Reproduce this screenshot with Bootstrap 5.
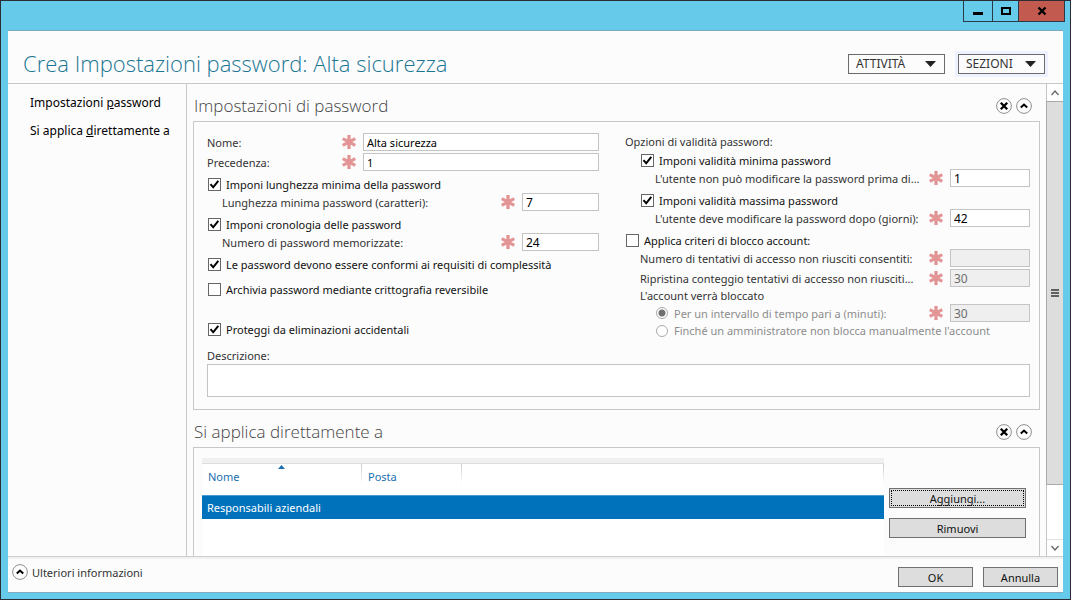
<!DOCTYPE html>
<html lang="it">
<head>
<meta charset="utf-8">
<meta name="viewport" content="width=device-width, initial-scale=1">
<title>Crea Impostazioni password</title>
<link href="https://cdn.jsdelivr.net/npm/bootstrap@5.3.0/dist/css/bootstrap.min.css" rel="stylesheet">
<style>
  body { font-family: "Noto Sans", "Open Sans", sans-serif; font-size: 11px; line-height: 17px; color: #333; background: #66caea; }
  .win { border: 1px solid #2c2c35; background: #66caea; }
  .titlebar { height: 29px; padding-right: 5px; }
  .wbtn { height: 21px; border: 1px solid #2b3a48; border-top: 0; background: transparent; padding: 0; margin-left: -1px; color: #000; }
  .wbtn.min { width: 30px; } .wbtn.max { width: 27px; } .wbtn.cls { width: 47px; background: #c35a50; }
  .client { background: #fcfcfc; margin: 0 7px 6px; border-top: 1px solid #7fabc0; border-bottom: 1px solid #7fabc0; min-height: 0; }
  .head { height: 53px; padding: 0 14px 0 15px; border-bottom: 1px solid #c8c8c8; }
  .head h1 { font-family: "Open Sans", sans-serif; font-size: 22px; line-height: 30px; font-weight: 300; color: #1b7693; padding-top: 12px; }
  .tools { column-gap: 13px; padding: 14px 4px 0 0; }
  .drop { height: 20px; border: 1px solid #6b6b6b; background: #fcfcfc; padding: 0 8px 0 7px; color: #333; font-size: 12px; line-height: 16px; }
  .drop.act { width: 97px; } .drop.sez { width: 87px; box-shadow: 0 0 0 3px #eef2ff; }
  .side { width: 179px; border-right: 1px solid #c8c8c8; padding: 10px 0 0 22px; font-size: 12px; }
  .side a { color: #000; text-decoration: none; margin-bottom: 11px; white-space: nowrap; }
  .content { min-width: 0; overflow: hidden; padding: 0 6px; }
  .content h2 { font-family: "Open Sans", sans-serif; font-size: 17px; line-height: 24px; font-weight: 300; color: #444; }
  .sec { height: 37px; padding: 6px 8px 0 1px; }
  .rnd { width: 16px; height: 16px; border: 0; background: none; padding: 0; line-height: 0; display: block; }
  .panel { border: 1px solid #c8c8c8; padding: 11px 9px 12px 13px; flex-shrink: 0; }
  .cols { display: grid; grid-template-columns: minmax(0,392fr) minmax(0,405fr); column-gap: 26px; height: 214px; }
  .ln { display: flex; align-items: center; height: 18px; white-space: nowrap; }
  .ln label { flex: 1 1 0; min-width: 0; }
  .ln svg { flex: none; margin-right: 7px; }
  .ln + .ln { margin-top: 2px; }
  .ck { display: flex; align-items: center; height: 17px; margin-top: 5px; color: #111; white-space: nowrap; }
  .ck.first { margin-top: 2px; } .ck.gap-s { margin-top: 8px; } .ck.gap-l { margin-top: 23px; }
  .ck input, .rd input[type=radio] { appearance: none; flex: none; width: 13px; height: 13px; margin: 0 5px 0 1px; border: 1px solid #666; background: #fff center/11px 11px no-repeat; }
  .ck input:checked { background-image: url("data:image/svg+xml,%3Csvg xmlns='http://www.w3.org/2000/svg' viewBox='0 0 11 11'%3E%3Cpath d='M1.5 5.2 4.2 8.3 9.3 1.8' fill='none' stroke='%23000' stroke-width='2'/%3E%3C/svg%3E"); }
  .rd input[type=radio] { border-radius: 50%; border-color: #aaa; width: 12px; height: 12px; margin-right: 6px; }
  .rd input[type=radio]:checked { background: radial-gradient(circle, #707070 0 3px, #fff 4px); }
  .rd { color: #8c8c8c; }
  .ln.rd + .ln.rd { height: 17px; margin-top: 0; }
  .tx { height: 18px; border: 1px solid #c4c4c4; background: #fff; border-radius: 0; padding: 0 3px; font-size: 11px; line-height: 16px; color: #000; outline: 0; }
  .tx:disabled { background: #efefef; color: #6d6d6d; }
  .w-name { width: 236px; } .w-num { width: 77px; } .w-opt { width: 80px; }
  .w-num, .w-opt { font-size: 12px; }
  .sub { padding-left: 15px; } .sub2 { padding-left: 30px; }
  textarea.tx { height: 33px; resize: none; display: block; }
  .panel.list { padding: 10px 13px 0 8px; flex: 1 0 0; overflow: hidden; column-gap: 5px; }
  .grid { background: #fff; border-top: 5px solid #f0f0f0; }
  .grid table { width: 100%; border-collapse: separate; border-spacing: 0; table-layout: fixed; border-top: 1px solid #ddd; }
  .grid col.c1 { width: 160px; } .grid col.c2 { width: 100px; }
  .grid th { height: 31px; padding: 4px 6px 0; vertical-align: top; font-weight: 400; color: #1a6fb0; position: relative; background: linear-gradient(#ccc, #fff) right top/1px 20px no-repeat; }
  .grid td { height: 24px; padding: 0 5px; background: #0072bc; color: #fff; border-top: 1px solid #4a9ad0; }
  .arr { position: absolute; left: 50%; top: 1px; margin-left: -4px; }
  .btnx { height: 20px; border: 1px solid #707070; background: #ddd; color: #111; padding: 1px 0 0; font-size: 11px; line-height: 17px; display: block; }
  .acts { width: 137px; padding-top: 30px; }
  .acts .btnx + .btnx { margin-top: 10px; }
  .focus { outline: 1px dotted #000; outline-offset: -3px; }
  .sbar { width: 17px; border-left: 1px solid #c4c4c4; background: #fff; }
  .sbar button { height: 17px; width: 16px; border: 0; background: #fff; padding: 0; line-height: 0; }
  .thumb { flex: 385 0 0; background: #ddd; border: 1px solid #aaa; border-right: 0; margin-left: -1px; }
  .track { flex: 54 0 0; }
  .foot { height: 36px; border-top: 1px solid #ccc; box-shadow: inset 0 2px #f1f1f1; padding: 0 5px 5px 4px; }
  .foot .btnx { width: 75px; }
  .oks { column-gap: 10px; padding-top: 10px; }
</style>
</head>
<body>
<svg width="0" height="0" class="position-absolute" aria-hidden="true">
  <symbol id="ast" viewBox="0 0 14 14"><path d="M7 0v14M.7 3.600l12.600 6.800M13.300 3.600.7 10.400" fill="none" stroke="#e39494" stroke-width="3.300"/></symbol>
  <symbol id="ring" viewBox="0 0 16 16"><circle cx="8" cy="8" r="7.4" fill="#fcfcfc" stroke="#909090"/></symbol>
  <symbol id="up" viewBox="0 0 16 16"><use href="#ring"/><path d="M4.800 9.600 8 6.600l3.200 3" fill="none" stroke="#000" stroke-width="2"/></symbol>
  <symbol id="ex" viewBox="0 0 16 16"><use href="#ring"/><path d="m4.800 4.800 6.400 6.400m0-6.400-6.400 6.400" fill="none" stroke="#000" stroke-width="2.300"/></symbol>
</svg>
<div class="win vh-100 d-flex flex-column">
  <div class="titlebar d-flex justify-content-end align-items-start flex-shrink-0">
    <button class="wbtn min" aria-label="Riduci a icona"><svg width="10" height="10" class="d-block mx-auto"><path d="M0 6h10v3H0z"/></svg></button>
    <button class="wbtn max" aria-label="Ingrandisci"><svg width="10" height="10" class="d-block mx-auto"><path d="M1 2h8v6H1z" fill="none" stroke="#000" stroke-width="2"/></svg></button>
    <button class="wbtn cls" aria-label="Chiudi"><svg width="10" height="10" class="d-block mx-auto"><path d="m1.500 1.500 7 7m0-7-7 7" stroke="#000" stroke-width="2.400"/></svg></button>
  </div>
  <div class="client flex-grow-1 d-flex flex-column">
    <header class="head d-flex align-items-center flex-shrink-0">
      <h1 class="m-0 me-auto text-nowrap">Crea Impostazioni password: Alta sicurezza</h1>
      <div class="tools d-flex">
        <button class="drop act d-flex align-items-center justify-content-between">ATTIVITÀ <svg width="11" height="6"><path d="M0 0h11L5.500 6z" fill="#222"/></svg></button>
        <button class="drop sez d-flex align-items-center justify-content-between">SEZIONI <svg width="11" height="6"><path d="M0 0h11L5.500 6z" fill="#222"/></svg></button>
      </div>
    </header>
    <div class="d-flex flex-grow-1 overflow-hidden">
      <nav class="side d-flex flex-column flex-shrink-0">
        <a href="#imp">Impostazioni <u>p</u>assword</a>
        <a href="#app">Si applica <u>d</u>irettamente a</a>
      </nav>
      <main class="content flex-grow-1 d-flex flex-column">
        <div class="sec d-flex align-items-center flex-shrink-0" id="imp">
          <h2 class="m-0 me-auto">Impostazioni di password</h2>
          <div class="d-flex gap-1"><button class="rnd" aria-label="Chiudi sezione"><svg width="16" height="16"><use href="#ex"/></svg></button><button class="rnd" aria-label="Comprimi sezione"><svg width="16" height="16"><use href="#up"/></svg></button></div>
        </div>
        <section class="panel">
          <div class="cols">
            <div>
              <div class="ln"><label for="nome">Nome:</label><svg width="14" height="14"><use href="#ast"/></svg><input class="tx w-name" id="nome" value="Alta sicurezza"></div>
              <div class="ln"><label for="prec">Precedenza:</label><svg width="14" height="14"><use href="#ast"/></svg><input class="tx w-name" id="prec" value="1"></div>
              <label class="ck"><input type="checkbox" checked>Imponi lunghezza minima della password</label>
              <div class="ln sub"><label for="lmin">Lunghezza minima password (caratteri):</label><svg width="14" height="14"><use href="#ast"/></svg><input class="tx w-num" id="lmin" value="7"></div>
              <label class="ck"><input type="checkbox" checked>Imponi cronologia delle password</label>
              <div class="ln sub"><label for="nmem">Numero di password memorizzate:</label><svg width="14" height="14"><use href="#ast"/></svg><input class="tx w-num" id="nmem" value="24"></div>
              <label class="ck"><input type="checkbox" checked>Le password devono essere conformi ai requisiti di complessità</label>
              <label class="ck gap-s"><input type="checkbox">Archivia password mediante crittografia reversibile</label>
              <label class="ck gap-l"><input type="checkbox" checked>Proteggi da eliminazioni accidentali</label>
            </div>
            <div>
              <div>Opzioni di validità password:</div>
              <label class="ck first sub"><input type="checkbox" checked>Imponi validità minima password</label>
              <div class="ln sub2"><label for="vmin">L'utente non può modificare la password prima di...</label><svg width="14" height="14"><use href="#ast"/></svg><input class="tx w-opt" id="vmin" value="1"></div>
              <label class="ck sub"><input type="checkbox" checked>Imponi validità massima password</label>
              <div class="ln sub2"><label for="vmax">L'utente deve modificare la password dopo (giorni):</label><svg width="14" height="14"><use href="#ast"/></svg><input class="tx w-opt" id="vmax" value="42"></div>
              <label class="ck"><input type="checkbox">Applica criteri di blocco account:</label>
              <div class="ln sub"><label for="ntent">Numero di tentativi di accesso non riusciti consentiti:</label><svg width="14" height="14"><use href="#ast"/></svg><input class="tx w-opt" id="ntent" disabled></div>
              <div class="ln sub"><label for="rip">Ripristina conteggio tentativi di accesso non riusciti...</label><svg width="14" height="14"><use href="#ast"/></svg><input class="tx w-opt" id="rip" value="30" disabled></div>
              <div class="sub pt-px">L'account verrà bloccato</div>
              <div class="ln rd sub2"><input type="radio" name="blk" id="r1" checked disabled><label for="r1">Per un intervallo di tempo pari a (minuti):</label><svg width="14" height="14"><use href="#ast"/></svg><input class="tx w-opt" aria-label="Minuti" value="30" disabled></div>
              <div class="ln rd sub2"><input type="radio" name="blk" id="r2" disabled><label for="r2">Finché un amministratore non blocca manualmente l'account</label></div>
            </div>
          </div>
          <label for="descr" class="d-block">Descrizione:</label>
          <textarea class="tx w-100" id="descr"></textarea>
        </section>
        <div class="sec d-flex align-items-center flex-shrink-0" id="app">
          <h2 class="m-0 me-auto">Si applica direttamente a</h2>
          <div class="d-flex gap-1"><button class="rnd" aria-label="Chiudi sezione"><svg width="16" height="16"><use href="#ex"/></svg></button><button class="rnd" aria-label="Comprimi sezione"><svg width="16" height="16"><use href="#up"/></svg></button></div>
        </div>
        <section class="panel list d-flex border-bottom-0">
          <div class="grid flex-grow-1">
            <table>
              <colgroup><col class="c1"><col class="c2"><col></colgroup>
              <thead><tr><th>Nome<svg class="arr" width="7" height="4"><path d="M0 4h7L3.500 0z" fill="#1a6fb0"/></svg></th><th>Posta</th><th></th></tr></thead>
              <tbody><tr><td>Responsabili aziendali</td><td></td><td></td></tr></tbody>
            </table>
          </div>
          <div class="acts flex-shrink-0">
            <button class="btnx w-100 focus">Aggiungi...</button>
            <button class="btnx w-100">Rimuovi</button>
          </div>
        </section>
      </main>
      <div class="sbar d-flex flex-column flex-shrink-0">
        <button aria-label="Scorri su"><svg width="8" height="6"><path d="m.5 5 3.500-4 3.500 4" fill="none" stroke="#666" stroke-width="1.300"/></svg></button>
        <div class="thumb d-flex align-items-center justify-content-center"><svg width="8" height="8"><path d="M0 1h8M0 4h8M0 7h8" stroke="#606060" stroke-width="2"/></svg></div>
        <div class="track"></div>
        <button class="border-top" aria-label="Scorri giù"><svg width="8" height="6"><path d="m.5 1 3.500 4L7.500 1" fill="none" stroke="#666" stroke-width="1.300"/></svg></button>
      </div>
    </div>
    <footer class="foot d-flex align-items-center flex-shrink-0">
      <button class="rnd me-1" aria-label="Espandi" id="more"><svg width="16" height="16"><use href="#up"/></svg></button>
      <label for="more" class="me-auto">Ulteriori informazioni</label>
      <div class="oks d-flex"><button class="btnx">OK</button><button class="btnx">Annulla</button></div>
    </footer>
  </div>
</div>
<script src="https://cdn.jsdelivr.net/npm/bootstrap@5.3.0/dist/js/bootstrap.bundle.min.js"></script>
</body>
</html>
